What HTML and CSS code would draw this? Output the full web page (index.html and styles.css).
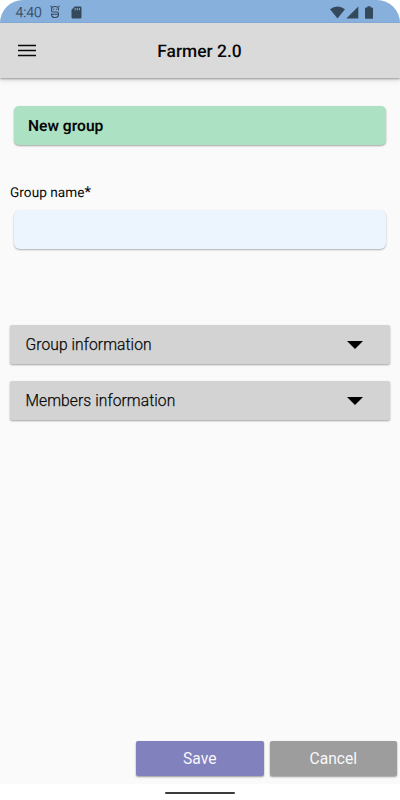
FILE: index.html
```html
<!DOCTYPE html>
<html lang="en">
<head>
<meta charset="utf-8">
<title>Farmer 2.0</title>
<link rel="stylesheet" href="styles.css">
</head>
<body>
<div class="screen">
  <div class="status">
    <span class="time">4:40</span>
    <svg class="s-icon" width="10" height="14" viewBox="0 0 10 14"><path d="M8.500 5.500V4.500C8.500 2.500 7.500 1.500 5 1.500C2.500 1.500 1.500 2.500 1.500 4.500V5.500C1.500 6.500 2 7 3 7H7C8 7 8.500 7.500 8.500 8.500V9.500C8.500 11.500 7.500 12.500 5 12.500C2.500 12.500 1.500 11.500 1.500 9.500V8.500"/><path d="M1.500 2.200L.700.8M8.500 2.200L9.300.8M3 4.300H4.200M5.800 4.300H7M1.500 9.300H8.500"/></svg>
    <svg class="sd-icon" width="11" height="13" viewBox="0 0 11 13"><path fill-rule="evenodd" d="M3.700.5H9.300Q10.500.5 10.500 1.700V11.300Q10.500 12.500 9.300 12.500H1.700Q.5 12.500.5 11.300V3.700ZM3.700 2V4.200H4.700V2ZM5.800 2V4.200H6.800V2ZM7.900 2V4.200H8.900V2Z"/></svg>
    <svg class="wifi" width="15" height="13" viewBox="0 0 15 13"><path d="M0 3.200Q3.300.4 7.500.4T15 3.200L7.500 12.500Z"/></svg>
    <svg class="signal" width="13" height="13" viewBox="0 0 13 13"><path d="M12.300.5V12.500H.3Z"/></svg>
    <svg class="battery" width="8" height="13" viewBox="0 0 8 13"><path d="M2.400.2H5.600V1.500H7.100Q8 1.500 8 2.400V11.900Q8 12.800 7.100 12.800H.9Q0 12.800 0 11.900V2.400Q0 1.500.9 1.500H2.400Z"/></svg>
  </div>
  <header class="appbar">
    <svg class="menu" width="18" height="14" viewBox="0 0 18 14"><path d="M0 1.500H18M0 6.500H18M0 11.500H18"/></svg>
    <h1 class="title">Farmer 2.0</h1>
  </header>
  <main class="content">
    <h2 class="banner">New group</h2>
    <label class="label" for="name">Group name<span class="star">*</span></label>
    <input class="field" id="name" type="text">
    <button class="panel"><span class="panel-text">Group information</span><svg width="16" height="8" viewBox="0 0 16 8"><path d="M0 0H16L8 8Z"/></svg></button>
    <button class="panel"><span class="panel-text">Members information</span><svg width="16" height="8" viewBox="0 0 16 8"><path d="M0 0H16L8 8Z"/></svg></button>
    <div class="actions">
      <button class="btn save">Save</button>
      <button class="btn cancel">Cancel</button>
    </div>
  </main>
  <div class="nav"><div class="handle"></div></div>
</div>
</body>
</html>
```
FILE: styles.css
```css
* { box-sizing: border-box; }
body { margin: 0; background: #fff; font-family: Roboto, "Liberation Sans", sans-serif; color: #080808; text-rendering: geometricPrecision; }
button, input { font: inherit; color: inherit; border: 0; margin: 0; }
svg { display: block; flex: none; }
.screen { display: flex; flex-direction: column; width: 400px; height: 800px; overflow: hidden; }
.status { flex: none; display: flex; align-items: center; height: 23px; padding: 1px 27px 0 15.5px; background: #88b0dc; border-radius: 24px 24px 0 0; color: #344a5c; fill: #344a5c; }
.time { width: 34.5px; padding-top: 1px; font-size: 14px; line-height: 22px; font-weight: 300; -webkit-text-stroke: .25px #344a5c; }
.s-icon { fill: none; stroke: #344a5c; stroke-width: 1.1; }
.sd-icon { margin-left: 11px; }
.wifi { margin-left: auto; }
.signal { margin-left: 1px; }
.battery { margin-left: 6px; }
.appbar { flex: none; z-index: 1; display: grid; grid-template-columns: 58px 1fr 59px; align-items: center; height: 55px; background: #dadada; box-shadow: 0 1px 2px rgba(0,0,0,.35), 0 3px 5px rgba(0,0,0,.1); }
.menu { margin-left: 18px; stroke: #080808; stroke-width: 1.6; }
.title { margin: 0; padding-top: 2px; text-align: center; font-size: 17.4px; font-weight: 500; line-height: 24px; }
.content { flex: 1; display: flex; flex-direction: column; padding: 28px 10px 8.5px; background: #fafafa; }
.banner { margin: 0 4px; height: 39px; padding-left: 14px; background: #ace2c3; border-radius: 5px; box-shadow: 0 1px 2px rgba(0,0,0,.35); font-size: 15.6px; font-weight: 600; line-height: 40px; }
.label { margin-top: 39px; font-size: 13.6px; line-height: 19px; letter-spacing: .05px; }
.star { font-size: 15px; line-height: 10px; }
.field { width: auto; height: 39px; margin: 7px 4px 76px; padding: 0 14px; background: #ecf5fd; border-radius: 6px; box-shadow: 0 1px 2px rgba(0,0,0,.3); }
.panel { display: flex; justify-content: space-between; align-items: center; height: 39px; margin-bottom: 17px; padding: 0 27px 0 15.5px; background: #d3d3d3; border-radius: 2px; box-shadow: 0 1px 2px rgba(0,0,0,.35); font-size: 15.6px; }
.panel-text { font-weight: 300; -webkit-text-stroke: .25px #080808; letter-spacing: .08px; }
.actions { display: flex; justify-content: flex-end; gap: 6px; margin: auto -7px 0 0; }
.btn { width: 127.5px; height: 34.5px; padding: 1px 0 0; border-radius: 2px; box-shadow: 0 1px 2px rgba(0,0,0,.4); color: #f8f8fc; font-size: 15.6px; }
.save { background: #8181be; }
.cancel { background: #9d9d9d; }
.nav { flex: none; height: 16px; padding-top: 8px; }
.handle { width: 70px; height: 2px; margin: 0 auto; background: #3c3c3c; border-radius: 1px; }
```
